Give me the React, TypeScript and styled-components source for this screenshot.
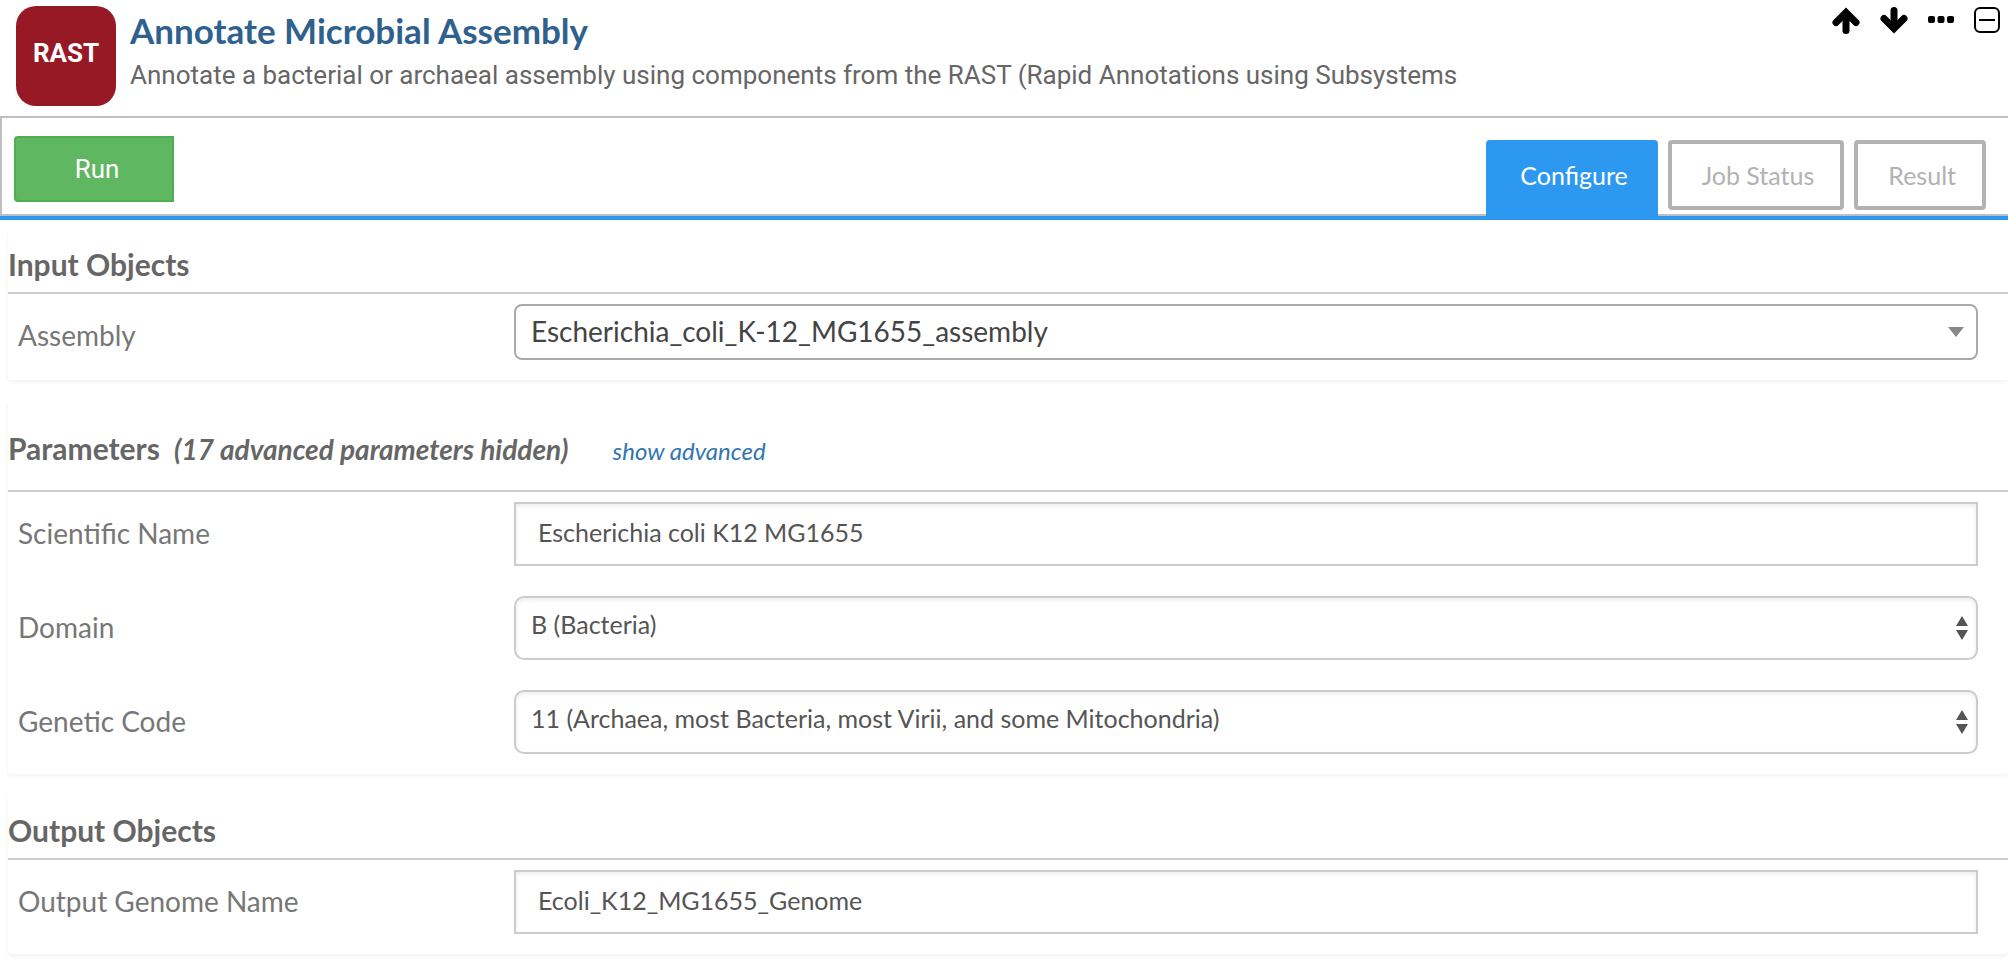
import React, { useState } from 'react';
import styled, { createGlobalStyle, css } from 'styled-components';

const GlobalStyle = createGlobalStyle`
  *, *::before, *::after { box-sizing: border-box; }
  body {
    margin: 0;
    background: #fff;
    color: #666;
    font-family: Lato, 'Open Sans', sans-serif;
  }
  button, input, select { font: inherit; }
`;

const Header = styled.header`
  display: flex;
  height: 116px;
  padding: 6px 8px 0 16px;
`;

const AppIcon = styled.div`
  flex: none;
  width: 100px;
  height: 100px;
  border-radius: 20px;
  background: #981926;
  color: #fff;
  font: 700 26px/94px Roboto, sans-serif;
  text-align: center;
`;

const Heading = styled.div`
  flex: 1;
  min-width: 0;
  padding: 4px 0 0 14px;
`;

const Title = styled.h1`
  margin: 0;
  color: #2f618e;
  font-size: 35px;
  font-weight: 700;
  line-height: 40px;
`;

const Subtitle = styled.p`
  margin: 5px 0 0;
  overflow: hidden;
  color: #666;
  font-family: Roboto, sans-serif;
  font-size: 26px;
  line-height: 40px;
  white-space: nowrap;
`;

const Actions = styled.div`
  display: flex;
  align-items: flex-start;
  gap: 20px;
`;

const IconButton = styled.button`
  display: block;
  padding: 0;
  border: 0;
  background: none;
  color: #000;
  cursor: pointer;

  svg { display: block; }
`;

const Toolbar = styled.div`
  border-bottom: 4px solid #2c98f0;
`;

const ToolbarInner = styled.div`
  display: flex;
  justify-content: space-between;
  height: 100px;
  padding: 18px 22px 0 12px;
  border: solid #bfbfbf;
  border-width: 2px 0 2px 2px;
`;

const RunButton = styled.button`
  width: 160px;
  height: 66px;
  padding: 0 0 0 6px;
  border: 2px solid #4fae51;
  border-radius: 4px 0 0 4px;
  background: #5fb762;
  color: #fff;
  font-family: Roboto, sans-serif;
  font-size: 26px;
  cursor: pointer;
`;

const Tabs = styled.div`
  display: flex;
  align-items: flex-start;
  gap: 10px;
  padding-top: 4px;
`;

const Tab = styled.button<{ $active: boolean }>`
  height: 70px;
  padding: 0 26px 0 30px;
  border: 4px solid #b2b2b2;
  border-radius: 4px;
  background: #fff;
  color: #b2b2b2;
  font-size: 25px;
  line-height: 60px;
  cursor: pointer;

  ${(p) =>
    p.$active &&
    css`
      height: 76px;
      padding-bottom: 6px;
      border-color: #2c98f0;
      border-radius: 4px 4px 0 0;
      background: #2c98f0;
      color: #fff;
    `}
`;

const Form = styled.form`
  display: flex;
  flex-direction: column;
  gap: 20px;
  padding: 8px 0 6px 8px;
`;

const Panel = styled.section`
  border-radius: 4px;
  box-shadow: 0 2px 4px rgba(0, 0, 0, 0.06);
`;

const PanelHeader = styled.div<{ $roomy?: boolean }>`
  display: flex;
  align-items: baseline;
  padding: ${(p) => (p.$roomy ? '28px 0 22px' : '16px 0 8px')};
  border-bottom: 2px solid #ccc;
`;

const PanelTitle = styled.h2`
  margin: 0;
  font-size: 30px;
  font-weight: 700;
  line-height: 40px;
`;

const HiddenNote = styled.em`
  margin-left: 14px;
  font-size: 28px;
  font-weight: 700;
  line-height: 30px;
`;

const AdvancedLink = styled.a`
  margin-left: 44px;
  color: #3276b1;
  font-size: 24px;
  font-style: italic;
  line-height: 30px;
  text-decoration: none;
`;

const Fields = styled.div`
  display: grid;
  gap: 30px;
  padding: 10px 30px 20px 0;
`;

const Row = styled.div<{ $compact?: boolean }>`
  display: grid;
  grid-template-columns: 506px minmax(0, 1fr);
  grid-template-rows: ${(p) => (p.$compact ? '56px' : '64px')};
  align-items: start;
`;

const Label = styled.label`
  padding-left: 10px;
  color: #777;
  font-size: 28px;
  line-height: 62px;
`;

const TextInput = styled.input`
  width: 100%;
  height: 64px;
  padding: 0 22px 4px;
  border: 2px solid #ccc;
  border-radius: 0;
  background: #fff;
  box-shadow: inset 0 2px 4px rgba(0, 0, 0, 0.08);
  color: #555;
  font-size: 25px;
  outline: 0;
`;

const SelectWrap = styled.div`
  position: relative;
`;

const Select = styled.select<{ $search?: boolean }>`
  appearance: none;
  display: block;
  width: 100%;
  height: 64px;
  padding: 0 40px 8px 15px;
  border: 2px solid #ccc;
  border-radius: 10px;
  background: #fff;
  box-shadow: inset 0 2px 4px rgba(0, 0, 0, 0.08);
  color: #555;
  font-size: 25px;
  outline: 0;

  ${(p) =>
    p.$search &&
    css`
      height: 56px;
      padding-bottom: 2px;
      border-color: #aaa;
      border-radius: 8px;
      box-shadow: none;
      color: #444;
      font-size: 28px;
    `}
`;

const SelectArrow = styled.svg<{ $inset: number }>`
  position: absolute;
  top: 0;
  bottom: 0;
  right: ${(p) => p.$inset}px;
  margin: auto 0;
  pointer-events: none;
`;

const ArrowUp = () => (
  <svg width="28" height="30" viewBox="0 0 28 30" fill="none" stroke="currentColor" strokeWidth="7" strokeLinecap="round">
    <path d="M4 16.5 14 6.5 24 16.5" strokeLinejoin="miter" />
    <path d="M14 7.5v17" />
  </svg>
);

const ArrowDown = () => (
  <svg width="28" height="30" viewBox="0 0 28 30" fill="none" stroke="currentColor" strokeWidth="7" strokeLinecap="round">
    <path d="M4 12.5 14 22.5 24 12.5" strokeLinejoin="miter" />
    <path d="M14 4.5v17" />
  </svg>
);

const Dots = () => (
  <svg width="26" height="30" viewBox="0 0 26 30" fill="currentColor">
    <rect x="0" y="10" width="7" height="7" rx="2" />
    <rect x="9.5" y="10" width="7" height="7" rx="2" />
    <rect x="19" y="10" width="7" height="7" rx="2" />
  </svg>
);

const Collapse = () => (
  <svg width="26" height="30" viewBox="0 0 26 30" fill="none" stroke="currentColor" strokeWidth="2">
    <rect x="1" y="2" width="24" height="24" rx="5" />
    <path d="M5 14h16" />
  </svg>
);

type FieldProps = { id: string; label: string; value: string };

const SearchSelect = ({ id, label, value }: FieldProps) => (
  <Row $compact>
    <Label htmlFor={id}>{label}</Label>
    <SelectWrap>
      <Select id={id} $search defaultValue={value}>
        <option>{value}</option>
      </Select>
      <SelectArrow $inset={14} width="16" height="10" viewBox="0 0 16 10" fill="#888">
        <path d="M0 0h16L8 10z" />
      </SelectArrow>
    </SelectWrap>
  </Row>
);

const SelectField = ({ id, label, value }: FieldProps) => (
  <Row>
    <Label htmlFor={id}>{label}</Label>
    <SelectWrap>
      <Select id={id} defaultValue={value}>
        <option>{value}</option>
      </Select>
      <SelectArrow $inset={10} width="12" height="24" viewBox="0 0 12 24" fill="#555">
        <path d="M0 10h12L6 0zM0 14h12L6 24z" />
      </SelectArrow>
    </SelectWrap>
  </Row>
);

const TextField = ({ id, label, value }: FieldProps) => (
  <Row>
    <Label htmlFor={id}>{label}</Label>
    <TextInput id={id} type="text" defaultValue={value} />
  </Row>
);

const TABS = ['Configure', 'Job Status', 'Result'];

export default function App() {
  const [tab, setTab] = useState('Configure');

  return (
    <>
      <GlobalStyle />
      <Header>
        <AppIcon>RAST</AppIcon>
        <Heading>
          <Title>Annotate Microbial Assembly</Title>
          <Subtitle>
            Annotate a bacterial or archaeal assembly using components from the RAST (Rapid Annotations using Subsystems
          </Subtitle>
        </Heading>
        <Actions>
          <IconButton type="button" aria-label="Move up"><ArrowUp /></IconButton>
          <IconButton type="button" aria-label="Move down"><ArrowDown /></IconButton>
          <IconButton type="button" aria-label="More"><Dots /></IconButton>
          <IconButton type="button" aria-label="Collapse"><Collapse /></IconButton>
        </Actions>
      </Header>

      <Toolbar>
        <ToolbarInner>
          <RunButton type="button">Run</RunButton>
          <Tabs role="tablist">
            {TABS.map((name) => (
              <Tab key={name} type="button" role="tab" aria-selected={tab === name} $active={tab === name} onClick={() => setTab(name)}>
                {name}
              </Tab>
            ))}
          </Tabs>
        </ToolbarInner>
      </Toolbar>

      <Form>
        <Panel>
          <PanelHeader>
            <PanelTitle>Input Objects</PanelTitle>
          </PanelHeader>
          <Fields>
            <SearchSelect id="assembly" label="Assembly" value="Escherichia_coli_K-12_MG1655_assembly" />
          </Fields>
        </Panel>

        <Panel>
          <PanelHeader $roomy>
            <PanelTitle>Parameters</PanelTitle>
            <HiddenNote>(17 advanced parameters hidden)</HiddenNote>
            <AdvancedLink href="#advanced">show advanced</AdvancedLink>
          </PanelHeader>
          <Fields>
            <TextField id="scientific-name" label="Scientific Name" value="Escherichia coli K12 MG1655" />
            <SelectField id="domain" label="Domain" value="B (Bacteria)" />
            <SelectField id="genetic-code" label="Genetic Code" value="11 (Archaea, most Bacteria, most Virii, and some Mitochondria)" />
          </Fields>
        </Panel>

        <Panel>
          <PanelHeader>
            <PanelTitle>Output Objects</PanelTitle>
          </PanelHeader>
          <Fields>
            <TextField id="output-genome" label="Output Genome Name" value="Ecoli_K12_MG1655_Genome" />
          </Fields>
        </Panel>
      </Form>
    </>
  );
}
